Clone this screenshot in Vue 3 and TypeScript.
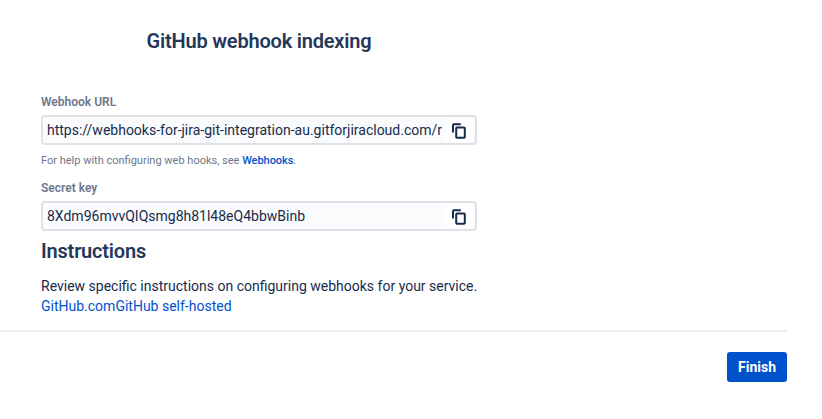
<script setup lang="ts">
interface Field { id: string; label: string; value: string; help?: boolean }
const fields: Field[] = [
  { id: 'url', label: 'Webhook URL', value: 'https://webhooks-for-jira-git-integration-au.gitforjiracloud.com/r', help: true },
  { id: 'secret', label: 'Secret key', value: '8Xdm96mvvQIQsmg8h81l48eQ4bbwBinb' },
]
</script>

<template>
  <main class="page">
    <h1 class="title">GitHub webhook indexing</h1>
    <section class="content">
      <div v-for="field in fields" :key="field.id" class="field">
        <div class="label">{{ field.label }}</div>
        <div class="input">
          <span class="value">{{ field.value }}</span>
          <button class="copy" type="button">
            <svg width="14" height="16" viewBox="0 0 14 16" fill="none" stroke="#172b4d" stroke-width="2">
              <path d="M1 9.5V2.2Q1 1.2 2 1.2H8.8" />
              <rect x="4.2" y="4.4" width="8.6" height="10.4" rx=".8" />
            </svg>
          </button>
        </div>
        <p v-if="field.help" class="help">For help with configuring web hooks, see <a>Webhooks</a>.</p>
      </div>
      <h2 class="subtitle">Instructions</h2>
      <p class="text">Review specific instructions on configuring webhooks for your service.</p>
      <p class="text links"><a>GitHub.com</a><a>GitHub self-hosted</a></p>
    </section>
    <footer class="footer"><button class="finish" type="button">Finish</button></footer>
  </main>
</template>

<style>
body { background: #fff; }
</style>
<style scoped>
.page { box-sizing: border-box; width: 822px; height: 419px; padding-top: 29px; overflow: hidden; font: 14px/20px Roboto, sans-serif; color: #172b4d; }
h1, h2, p { margin: 0; }
.title { width: 436px; margin-left: 41px; text-align: center; font-size: 20px; line-height: 24px; font-weight: 600; letter-spacing: -.2px; color: #253858; }
.content { width: 436px; margin: 41px 0 0 41px; }
.label { height: 16px; margin-bottom: 5px; font-size: 12px; line-height: 16px; font-weight: 600; color: #6b778c; }
.input { box-sizing: border-box; display: flex; height: 30px; border: 2px solid #dfe1e6; border-radius: 4px; background: #fafbfc; }
.value { flex: 1; min-width: 0; margin-left: 4px; line-height: 26px; white-space: nowrap; }
.copy { display: flex; align-items: center; justify-content: center; width: 28px; height: 24px; margin: 1px 2px 1px 0; padding: 2px 0 0; box-sizing: border-box; border: 0; border-radius: 3px; background: #fff; }
.help { height: 14px; margin: 9px 0 12px; font-size: 11px; line-height: 14px; color: #6b778c; }
a { color: #0052cc; }
.help a { font-weight: 500; letter-spacing: -.05px; }
.subtitle { margin-top: 8px; font-size: 20px; line-height: 24px; font-weight: 600; letter-spacing: -.2px; color: #253858; }
.text { line-height: 20px; white-space: nowrap; }
.subtitle + .text { margin-top: 13px; }
.footer { box-sizing: border-box; width: 787px; margin-top: 14px; padding-top: 20px; border-top: 2px solid #ebecf0; display: flex; justify-content: flex-end; }
.finish { width: 60px; height: 30px; padding: 0; border: 0; border-radius: 3px; background: #0052cc; color: #fff; font: 700 14px/30px Roboto, sans-serif; }
</style>
